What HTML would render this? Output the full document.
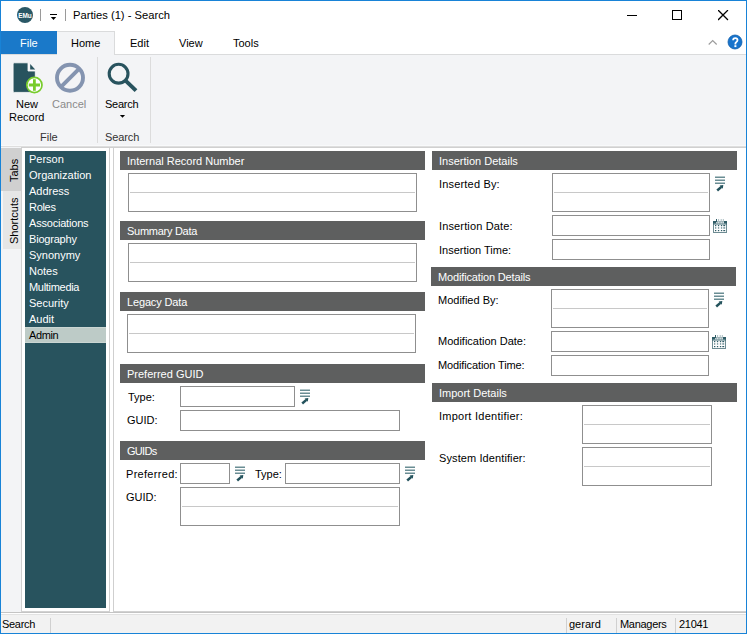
<!DOCTYPE html>
<html><head><meta charset="utf-8">
<style>
*{box-sizing:border-box;margin:0;padding:0}
html,body{width:747px;height:634px;overflow:hidden;background:#fff}
body{position:relative;font-family:"Liberation Sans",sans-serif;font-size:11px;color:#000}
.a{position:absolute}
.t{position:absolute;white-space:nowrap;line-height:1}
.hdr{position:absolute;height:19px;background:#5e5f5f}
.hdr span{position:absolute;left:7px;top:5px;color:#fff;white-space:nowrap;line-height:1}
.box{position:absolute;border:1px solid #8f8f8f;background:#fff}
.box2:after{content:"";position:absolute;left:1px;right:1px;top:18px;height:1px;background:#c8c8c8}
.lbl{position:absolute;white-space:nowrap;line-height:1}
.item{position:absolute;left:25px;width:81px;height:16px;color:#fff}
.item span{position:absolute;left:4px;top:3px;line-height:1}
</style></head><body>
<!-- window border -->
<div class="a" style="left:0;top:0;width:747px;height:634px;border:1px solid #1883d7;z-index:50;pointer-events:none"></div>

<!-- title bar -->
<svg class="a" style="left:16px;top:6px" width="18" height="18" viewBox="0 0 18 18">
  <circle cx="9" cy="9" r="8" fill="#2a5866"/>
  <text x="2.2" y="11.6" font-family="Liberation Sans" font-weight="bold" font-size="7.6" fill="#fff" textLength="13.6" lengthAdjust="spacingAndGlyphs">EMu</text>
</svg>
<div class="a" style="left:40px;top:9px;width:1px;height:12px;background:#9a9a9a"></div>
<div class="a" style="left:50px;top:14px;width:7px;height:1px;background:#000"></div>
<svg class="a" style="left:50px;top:17px" width="8" height="5"><path d="M0.8 0 H6.2 L3.5 3 Z" fill="#000"/></svg>
<div class="a" style="left:65px;top:9px;width:1px;height:12px;background:#9a9a9a"></div>
<div class="t" style="left:73px;top:10px;font-size:11.2px">Parties (1) - Search</div>
<div class="a" style="left:627px;top:15px;width:10px;height:1px;background:#000"></div>
<div class="a" style="left:672px;top:10px;width:10px;height:10px;border:1px solid #000"></div>
<svg class="a" style="left:718px;top:10px" width="12" height="12"><path d="M0.5 0.5 L9.5 9.5 M9.5 0.5 L0.5 9.5" stroke="#000" stroke-width="1.25" stroke-linecap="square"/></svg>

<!-- ribbon tabs -->
<div class="a" style="left:1px;top:31px;width:56px;height:23px;background:#1a79c9"></div>
<div class="t" style="left:20px;top:38px;color:#fff">File</div>
<div class="a" style="left:57px;top:31px;width:58px;height:24px;background:#f3f4f6;border-top:1px solid #dadbdc;border-right:1px solid #dadbdc;z-index:2"></div>
<div class="t" style="left:71px;top:38px;z-index:3">Home</div>
<div class="t" style="left:130px;top:38px">Edit</div>
<div class="t" style="left:179px;top:38px">View</div>
<div class="t" style="left:233px;top:38px">Tools</div>
<svg class="a" style="left:708px;top:39px" width="10" height="7"><path d="M0.7 5.5 L4.7 1.5 L8.7 5.5" stroke="#9b9b9b" stroke-width="1.1" fill="none"/></svg>
<svg class="a" style="left:727px;top:34px" width="16" height="16" viewBox="0 0 16 16">
  <circle cx="8" cy="8" r="7" fill="#1874cc" stroke="#0f5eab" stroke-width="0.8"/>
  <path d="M6.1 6.3 Q6.1 4.1 8.3 4.1 Q10.5 4.1 10.5 6.1 Q10.5 7.3 9.4 8 Q8.4 8.6 8.4 9.6 V10.4" fill="none" stroke="#fff" stroke-width="1.8"/>
  <rect x="7.4" y="11.2" width="2" height="1.9" fill="#fff"/>
</svg>

<!-- ribbon body -->
<div class="a" style="left:1px;top:54px;width:745px;height:93px;background:#f3f4f6;border-top:1px solid #dadbdc;border-bottom:1px solid #dedede"></div>
<div class="a" style="left:1px;top:145px;width:745px;height:1px;background:#f8f9fa"></div>
<!-- new record icon -->
<svg class="a" style="left:12px;top:62px" width="34" height="34" viewBox="0 0 34 34">
  <path d="M2.2 0.8 H16 V9 H23.3 V29.2 Q23.3 30.4 22.1 30.4 H2.3 Q1.1 30.4 1.1 29.2 V2 Q1.1 0.8 2.2 0.8 Z" fill="#28535e" stroke="#fff" stroke-width="0.8"/>
  <path d="M18.2 2 V7.6 H23.2 Z" fill="#28535e"/>
  <circle cx="22.4" cy="23" r="7.6" fill="#fff" stroke="#78cc2c" stroke-width="1.7"/>
  <path d="M22.4 17.2 V28.8 M16.8 23 H28" stroke="#78cc2c" stroke-width="2.8"/>
</svg>
<div class="t" style="left:16px;top:99px">New</div>
<div class="t" style="left:9px;top:112px">Record</div>
<svg class="a" style="left:53px;top:61px" width="34" height="34" viewBox="0 0 34 34">
  <circle cx="17" cy="16.8" r="13" fill="none" stroke="#8494b0" stroke-width="3.9"/>
  <path d="M26 7.8 L8 25.8" stroke="#8494b0" stroke-width="3.9"/>
</svg>
<div class="t" style="left:52px;top:99px;color:#8a8a8a">Cancel</div>
<div class="t" style="left:40px;top:132px;color:#333">File</div>
<div class="a" style="left:97px;top:57px;width:1px;height:86px;background:#dcdcdc"></div>
<svg class="a" style="left:104px;top:59px" width="36" height="36" viewBox="0 0 36 36">
  <circle cx="14.6" cy="14.7" r="9.4" fill="none" stroke="#28535e" stroke-width="3.1"/>
  <path d="M21.3 21.4 L32 31.6" stroke="#28535e" stroke-width="4"/>
</svg>
<div class="t" style="left:105px;top:99px;letter-spacing:-0.25px">Search</div>
<svg class="a" style="left:119px;top:115px" width="7" height="4"><path d="M0.9 0 H6.1 L3.5 2.8 Z" fill="#000"/></svg>
<div class="t" style="left:105px;top:132px;color:#333;letter-spacing:-0.1px">Search</div>
<div class="a" style="left:150px;top:57px;width:1px;height:86px;background:#dcdcdc"></div>

<!-- left strip -->
<div class="a" style="left:21px;top:147px;width:725px;height:1px;background:#d0d0d0;z-index:1"></div>
<div class="a" style="left:1px;top:147px;width:20px;height:465px;background:#f3f4f6"></div>
<div class="a" style="left:1px;top:148px;width:20px;height:43px;background:#d0d0d0"></div>
<div class="a" style="left:3px;top:191px;width:18px;height:58px;background:#e6e6e6"></div>
<div class="t" style="left:9px;top:181.8px;transform-origin:0 0;transform:rotate(-90deg);font-size:11px">Tabs</div>
<div class="t" style="left:9px;top:243.6px;transform-origin:0 0;transform:rotate(-90deg);font-size:11px">Shortcuts</div>
<div class="a" style="left:21px;top:147px;width:1px;height:465px;background:#cfcfcf"></div>
<div class="a" style="left:22px;top:148px;width:87px;height:464px;background:#fff"></div>
<div class="a" style="left:25px;top:151px;width:81px;height:457px;background:#28535e"></div>
<div class="a" style="left:109px;top:147px;width:1px;height:465px;background:#cfcfcf"></div>
<div class="a" style="left:113px;top:147px;width:1px;height:465px;background:#cfcfcf"></div>

<div class="item" style="top:151px"><span>Person</span></div>
<div class="item" style="top:167px"><span>Organization</span></div>
<div class="item" style="top:183px"><span>Address</span></div>
<div class="item" style="top:199px"><span style="letter-spacing:-0.3px">Roles</span></div>
<div class="item" style="top:215px"><span style="letter-spacing:-0.2px">Associations</span></div>
<div class="item" style="top:231px"><span style="letter-spacing:-0.2px">Biography</span></div>
<div class="item" style="top:247px"><span>Synonymy</span></div>
<div class="item" style="top:263px"><span>Notes</span></div>
<div class="item" style="top:279px"><span style="letter-spacing:-0.3px">Multimedia</span></div>
<div class="item" style="top:295px"><span>Security</span></div>
<div class="item" style="top:311px"><span>Audit</span></div>
<div class="item" style="top:327px;background:#bdcbc7;color:#000;border-top:1px solid #cad6d3;border-bottom:1px solid #cad6d3"><span style="top:2px;letter-spacing:-0.4px">Admin</span></div>

<!-- left column -->
<div class="hdr" style="left:120px;top:151px;width:305px"><span>Internal Record Number</span></div>
<div class="box box2" style="left:128px;top:173px;width:289px;height:39px"></div>
<div class="hdr" style="left:120px;top:221px;width:305px"><span style="letter-spacing:-0.28px">Summary Data</span></div>
<div class="box box2" style="left:128px;top:243px;width:289px;height:39px"></div>
<div class="hdr" style="left:120px;top:292px;width:305px"><span style="letter-spacing:-0.15px">Legacy Data</span></div>
<div class="box box2" style="left:127px;top:314px;width:289px;height:39px"></div>

<div class="hdr" style="left:120px;top:364px;width:305px"><span>Preferred GUID</span></div>
<div class="lbl" style="left:128px;top:392px">Type:</div>
<div class="box" style="left:180px;top:386px;width:115px;height:21px"></div>
<div class="lbl" style="left:127px;top:415px">GUID:</div>
<div class="box" style="left:180px;top:410px;width:220px;height:21px"></div>

<div class="hdr" style="left:120px;top:441px;width:305px"><span style="letter-spacing:-0.7px">GUIDs</span></div>
<div class="lbl" style="left:126px;top:469px;letter-spacing:0.3px">Preferred:</div>
<div class="box" style="left:180px;top:463px;width:50px;height:21px"></div>
<div class="lbl" style="left:255px;top:469px">Type:</div>
<div class="box" style="left:285px;top:463px;width:115px;height:21px"></div>
<div class="lbl" style="left:126px;top:492px">GUID:</div>
<div class="box box2" style="left:180px;top:487px;width:220px;height:39px"></div>

<!-- right column -->
<div class="hdr" style="left:432px;top:151px;width:305px"><span>Insertion Details</span></div>
<div class="lbl" style="left:439px;top:179px;letter-spacing:0.18px">Inserted By:</div>
<div class="box box2" style="left:552px;top:173px;width:158px;height:39px"></div>
<div class="lbl" style="left:439px;top:221px;letter-spacing:0.14px">Insertion Date:</div>
<div class="box" style="left:552px;top:215px;width:158px;height:21px"></div>
<div class="lbl" style="left:439px;top:245px">Insertion Time:</div>
<div class="box" style="left:552px;top:239px;width:158px;height:21px"></div>

<div class="hdr" style="left:431px;top:267px;width:305px"><span style="letter-spacing:-0.15px">Modification Details</span></div>
<div class="lbl" style="left:438px;top:295px">Modified By:</div>
<div class="box box2" style="left:551px;top:289px;width:158px;height:39px"></div>
<div class="lbl" style="left:438px;top:336px">Modification Date:</div>
<div class="box" style="left:551px;top:331px;width:158px;height:21px"></div>
<div class="lbl" style="left:438px;top:360px;letter-spacing:-0.12px">Modification Time:</div>
<div class="box" style="left:551px;top:355px;width:158px;height:21px"></div>

<div class="hdr" style="left:432px;top:383px;width:305px"><span>Import Details</span></div>
<div class="lbl" style="left:439px;top:411px;letter-spacing:0.25px">Import Identifier:</div>
<div class="box box2" style="left:582px;top:405px;width:130px;height:39px"></div>
<div class="lbl" style="left:439px;top:453px;letter-spacing:0.1px">System Identifier:</div>
<div class="box box2" style="left:582px;top:447px;width:130px;height:39px"></div>


<!-- icons -->
<svg class="a" style="left:299px;top:388px" width="13" height="17" viewBox="0 0 13 17"><path d="M1 2.2H11M1 5.2H11M1 8.2H11" stroke="#6a8d94" stroke-width="1.6"/><path d="M5.6 10.6 L9.3 10.1 L8.8 13.8 Z" fill="#23525c"/><path d="M3.2 15.5 L7.4 11.9" stroke="#23525c" stroke-width="2.5"/></svg>
<svg class="a" style="left:234px;top:465px" width="13" height="17" viewBox="0 0 13 17"><path d="M1 2.2H11M1 5.2H11M1 8.2H11" stroke="#6a8d94" stroke-width="1.6"/><path d="M5.6 10.6 L9.3 10.1 L8.8 13.8 Z" fill="#23525c"/><path d="M3.2 15.5 L7.4 11.9" stroke="#23525c" stroke-width="2.5"/></svg>
<svg class="a" style="left:404px;top:465px" width="13" height="17" viewBox="0 0 13 17"><path d="M1 2.2H11M1 5.2H11M1 8.2H11" stroke="#6a8d94" stroke-width="1.6"/><path d="M5.6 10.6 L9.3 10.1 L8.8 13.8 Z" fill="#23525c"/><path d="M3.2 15.5 L7.4 11.9" stroke="#23525c" stroke-width="2.5"/></svg>
<svg class="a" style="left:714px;top:175px" width="13" height="17" viewBox="0 0 13 17"><path d="M1 2.2H11M1 5.2H11M1 8.2H11" stroke="#6a8d94" stroke-width="1.6"/><path d="M5.6 10.6 L9.3 10.1 L8.8 13.8 Z" fill="#23525c"/><path d="M3.2 15.5 L7.4 11.9" stroke="#23525c" stroke-width="2.5"/></svg>
<svg class="a" style="left:713px;top:291px" width="13" height="17" viewBox="0 0 13 17"><path d="M1 2.2H11M1 5.2H11M1 8.2H11" stroke="#6a8d94" stroke-width="1.6"/><path d="M5.6 10.6 L9.3 10.1 L8.8 13.8 Z" fill="#23525c"/><path d="M3.2 15.5 L7.4 11.9" stroke="#23525c" stroke-width="2.5"/></svg>
<svg class="a" style="left:713px;top:219px" width="14" height="15" viewBox="0 0 14 15"><rect x="0.5" y="2.5" width="13" height="11" fill="#fff" stroke="#6e8c93" stroke-width="1"/><rect x="0" y="2" width="3" height="2.6" fill="#2f5c66"/><rect x="11" y="2" width="3" height="2.6" fill="#2f5c66"/><rect x="3" y="2" width="8" height="2.6" fill="#9db2b6"/><path d="M3.5 0V3.5" stroke="#2f5c66" stroke-width="1"/><path d="M5.6 0V3.5M8.2 0V3.5M10.3 0V3.5" stroke="#a9bcc0" stroke-width="1"/><g fill="#fff"><rect x="3" y="3.4" width="1.1" height="1"/><rect x="5.1" y="3.4" width="1.1" height="1"/><rect x="7.7" y="3.4" width="1.1" height="1"/><rect x="9.8" y="3.4" width="1.1" height="1"/></g><rect x="0" y="4.6" width="14" height="0.9" fill="#3b6670"/><g fill="#2f5c66"><rect x="2" y="6" width="1.3" height="1.2"/><rect x="4.9" y="6" width="1.3" height="1.2"/><rect x="7.9" y="6" width="1.3" height="1.2"/><rect x="10.3" y="6" width="1.9" height="1.2"/><rect x="2" y="11" width="1.3" height="1.2"/><rect x="4.9" y="11" width="1.3" height="1.2"/><rect x="7.9" y="11" width="1.3" height="1.2"/><rect x="10.3" y="11" width="1.9" height="1.2"/></g><g fill="#5b7f87"><rect x="2" y="8.3" width="1.3" height="1.3"/><rect x="4.9" y="8.3" width="1.3" height="1.3"/><rect x="7.9" y="8.3" width="1.3" height="1.3"/><rect x="10.3" y="8.3" width="1.9" height="1.3"/></g></svg>
<svg class="a" style="left:712px;top:335px" width="14" height="15" viewBox="0 0 14 15"><rect x="0.5" y="2.5" width="13" height="11" fill="#fff" stroke="#6e8c93" stroke-width="1"/><rect x="0" y="2" width="3" height="2.6" fill="#2f5c66"/><rect x="11" y="2" width="3" height="2.6" fill="#2f5c66"/><rect x="3" y="2" width="8" height="2.6" fill="#9db2b6"/><path d="M3.5 0V3.5" stroke="#2f5c66" stroke-width="1"/><path d="M5.6 0V3.5M8.2 0V3.5M10.3 0V3.5" stroke="#a9bcc0" stroke-width="1"/><g fill="#fff"><rect x="3" y="3.4" width="1.1" height="1"/><rect x="5.1" y="3.4" width="1.1" height="1"/><rect x="7.7" y="3.4" width="1.1" height="1"/><rect x="9.8" y="3.4" width="1.1" height="1"/></g><rect x="0" y="4.6" width="14" height="0.9" fill="#3b6670"/><g fill="#2f5c66"><rect x="2" y="6" width="1.3" height="1.2"/><rect x="4.9" y="6" width="1.3" height="1.2"/><rect x="7.9" y="6" width="1.3" height="1.2"/><rect x="10.3" y="6" width="1.9" height="1.2"/><rect x="2" y="11" width="1.3" height="1.2"/><rect x="4.9" y="11" width="1.3" height="1.2"/><rect x="7.9" y="11" width="1.3" height="1.2"/><rect x="10.3" y="11" width="1.9" height="1.2"/></g><g fill="#5b7f87"><rect x="2" y="8.3" width="1.3" height="1.3"/><rect x="4.9" y="8.3" width="1.3" height="1.3"/><rect x="7.9" y="8.3" width="1.3" height="1.3"/><rect x="10.3" y="8.3" width="1.9" height="1.3"/></g></svg>
<!-- status bar -->
<div class="a" style="left:21px;top:611px;width:725px;height:1px;background:#d2d2d2"></div>
<div class="a" style="left:110px;top:611px;width:3px;height:1px;background:#fff"></div>
<div class="a" style="left:1px;top:612px;width:745px;height:1px;background:#c4c4c4"></div>
<div class="a" style="left:1px;top:613px;width:745px;height:1px;background:#fff"></div>
<div class="a" style="left:1px;top:614px;width:745px;height:1px;background:#e2e2e2"></div>
<div class="a" style="left:1px;top:615px;width:745px;height:18px;background:#f2f2f2"></div>
<div class="t" style="left:2px;top:619px;font-size:11px;letter-spacing:-0.3px">Search</div>
<div class="a" style="left:50px;top:618px;width:1px;height:15px;background:#d0d0d0"></div>
<div class="a" style="left:566px;top:618px;width:1px;height:15px;background:#d0d0d0"></div>
<div class="t" style="left:569px;top:619px">gerard</div>
<div class="a" style="left:616px;top:618px;width:1px;height:15px;background:#d0d0d0"></div>
<div class="t" style="left:620px;top:619px;letter-spacing:-0.3px">Managers</div>
<div class="a" style="left:675px;top:618px;width:1px;height:15px;background:#d0d0d0"></div>
<div class="t" style="left:679px;top:619px;letter-spacing:-0.3px">21041</div>
</body></html>
